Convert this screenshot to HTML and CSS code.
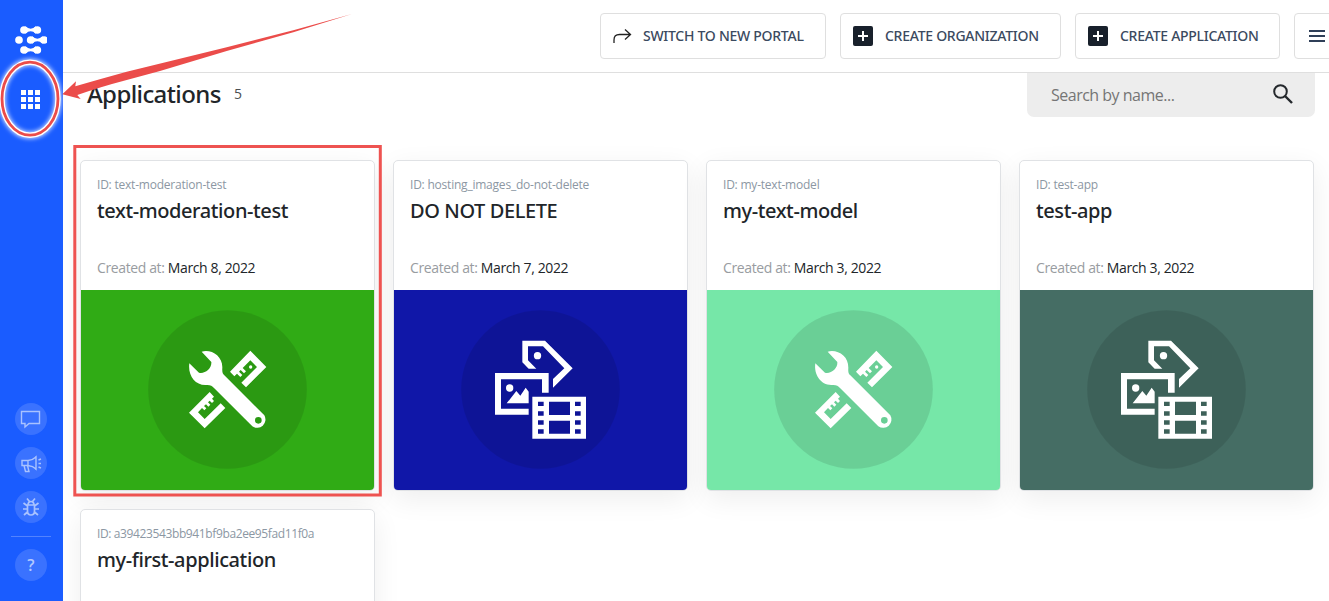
FILE: index.html
```html
<!DOCTYPE html>
<html lang="en">
<head>
<meta charset="utf-8">
<title>Applications</title>
<link rel="stylesheet" href="styles.css">
</head>
<body>
<svg class="defs" aria-hidden="true">
  <symbol id="tools" viewBox="24 31 477 477">
    <circle cx="262.500" cy="269.500" r="238" fill="#000" fill-opacity=".1"/>
    <path fill="#fff" fill-rule="evenodd" d="M185 156C213 148 248 168 247 204C246 218 248 222 253 227L373 347A25 25 0 0 1 337 380L222 265C216 257 210 255 196 256C164 256 143 225 148 191L177 219C193 224 216 207 214 187ZM355 352A10 10 0 1 0 355 372A10 10 0 1 0 355 352Z"/>
    <path fill="#fff" fill-rule="evenodd" d="M331 153L379 202L318 263L304 249L351 202L331 182L308 205L318 215L312 221L302 211L297 216L307 226L301 232L291 222L283 230L270 216Z"/>
    <circle cx="332" cy="202" r="5" fill="#fff"/>
    <path fill="#fff" d="M209 277L222 291L216 297L222 304L216 310L209 303L204 308L211 315L205 321L198 314L192 319L199 326L193 332L186 325L174 338L194 358L242 311L256 325L194 386L147 339Z"/>
  </symbol>
  <symbol id="media" viewBox="18 31 477 477">
    <circle cx="256.500" cy="269.500" r="238" fill="#000" fill-opacity=".1"/>
    <path fill="#fff" fill-rule="evenodd" d="M202 123H270L353 206L294 264V238L328 206L264 140H219V182L244 207H221L202 188Z"/>
    <circle cx="247.500" cy="168" r="11" fill="#fff"/>
    <path fill="#fff" d="M120 220H281V279H261V239H138V327H221V345H120Z"/>
    <circle cx="164" cy="265" r="11" fill="#fff"/>
    <path fill="#fff" d="M155 311L184 274L196 288L212 264L221 276V311Z"/>
    <path fill="#fff" fill-rule="evenodd" d="M232 291H393V417H232ZM282 306V346H345V306ZM282 363V402H345V363ZM249 306V319H266V306ZM249 335V348H266V335ZM249 362V375H266V362ZM249 389V402H266V389ZM360 306V319H377V306ZM360 335V348H377V335ZM360 362V375H377V362ZM360 389V402H377V389Z"/>
  </symbol>
</svg>

<aside class="sidebar">
  <svg class="logo" viewBox="0 0 96 84" fill="#fff">
    <g id="link"><circle cx="27" cy="12" r="11.500"/><circle cx="67" cy="12" r="11.500"/><path d="M31 1Q47 15 63 1V23Q47 9 31 23Z"/></g>
    <circle cx="12" cy="42" r="11.500"/>
    <use href="#link" x="20" y="30"/>
    <use href="#link" y="60"/>
  </svg>
  <svg class="grid-icon" viewBox="0 0 19 19" fill="#fff"><path d="M0 0h5v5H0zM7 0h5v5H7zM14 0h5v5h-5zM0 7h5v5H0zM7 7h5v5H7zM14 7h5v5h-5zM0 14h5v5H0zM7 14h5v5H7zM14 14h5v5h-5z"/></svg>
  <nav class="side-tools">
    <a class="round"><svg viewBox="0 0 32 32"><path d="M6.500 8.500H24.500V20.500H14L10 24V20.500H6.500Z"/></svg></a>
    <a class="round"><svg viewBox="0 0 32 32"><path d="M13 13.500H7V18.500H13ZM13 13.500Q18 13 21 10V22Q18 19 13 18.500M9 18.500L10.500 24.500H14L12.500 18.500M21 9V23M23.500 13L26 12M23.500 16.500H26M23.500 20L26 21"/></svg></a>
    <a class="round"><svg class="bold" viewBox="0 0 32 32"><path d="M12.500 14H19.500V20Q19.500 24 16 24T12.500 20ZM13 14Q13 10.500 16 10.500T19 14M12 7.500L14.500 10.500M20 7.500L17.500 10.500M8.500 12L12.500 15M23.500 12L19.500 15M8 18H12.500M24 18H19.500M9 24L12.500 21M23 24L19.500 21"/></svg></a>
    <hr>
    <a class="round help">?</a>
  </nav>
</aside>

<div class="page">
  <header class="topbar">
    <a class="btn switch"><svg width="20" height="16" viewBox="0 0 20 16" fill="none" stroke="#222" stroke-width="1.300"><path d="M1 15V12Q1 6.500 6.500 6.500H17.500M12 1.500L17.500 6.500L12 11.500"/></svg><span>SWITCH TO NEW PORTAL</span></a>
    <a class="btn org"><i class="plus"></i><span>CREATE ORGANIZATION</span></a>
    <a class="btn app"><i class="plus"></i><span>CREATE APPLICATION</span></a>
    <a class="btn menu"><svg width="16" height="12" viewBox="0 0 16 12" stroke="#2f3f58" stroke-width="2"><path d="M0 1H16M0 6H16M0 11H16"/></svg></a>
  </header>
  <main>
    <div class="heading">
      <h1>Applications</h1><span class="count">5</span>
      <div class="search"><span>Search by name...</span><svg width="22" height="22" viewBox="0 0 22 22" fill="none" stroke="#24282c"><circle cx="8.500" cy="8.500" r="6.300" stroke-width="2"/><path d="M13 13L20 20" stroke-width="2.400"/></svg></div>
    </div>
    <section class="cards">
      <article class="card">
        <div class="info"><p class="id">ID: text-moderation-test</p><h2>text-moderation-test</h2><p class="date">Created at: <b>March 8, 2022</b></p></div>
        <div class="banner green"><svg><use href="#tools"/></svg></div>
      </article>
      <article class="card">
        <div class="info"><p class="id">ID: hosting_images_do-not-delete</p><h2 class="caps">DO NOT DELETE</h2><p class="date">Created at: <b>March 7, 2022</b></p></div>
        <div class="banner blue"><svg><use href="#media"/></svg></div>
      </article>
      <article class="card">
        <div class="info"><p class="id">ID: my-text-model</p><h2>my-text-model</h2><p class="date">Created at: <b>March 3, 2022</b></p></div>
        <div class="banner mint"><svg><use href="#tools"/></svg></div>
      </article>
      <article class="card">
        <div class="info"><p class="id">ID: test-app</p><h2>test-app</h2><p class="date">Created at: <b>March 3, 2022</b></p></div>
        <div class="banner teal"><svg><use href="#media"/></svg></div>
      </article>
      <article class="card">
        <div class="info"><p class="id hash">ID: a39423543bb941bf9ba2ee95fad11f0a</p><h2>my-first-application</h2></div>
      </article>
    </section>
  </main>
</div>

<svg class="annotations" viewBox="0 0 1329 601">
  <defs><filter id="glow" x="-30%" y="-30%" width="160%" height="160%"><feGaussianBlur stdDeviation="2"/></filter></defs>
  <g fill="none">
    <ellipse cx="30" cy="98.700" rx="28" ry="36.500" stroke="#fff" stroke-opacity=".8" stroke-width="7" filter="url(#glow)"/>
    <ellipse cx="30" cy="98.700" rx="28" ry="36.500" stroke="#fff" stroke-width="5.400"/>
    <ellipse cx="30" cy="98.700" rx="28" ry="36.500" stroke="#eb4c4a" stroke-width="2.800"/>
    <rect x="74.800" y="146.500" width="305.500" height="348.500" stroke="#ee5351" stroke-width="3"/>
  </g>
  <path fill="#eb4c4a" d="M62.300 94.300L76 81.300L75.300 86.300Q100 79 126.700 71.700L226.700 47.300L293.300 30.300L352 14L293.300 32.300L226.700 51L160 71L126.700 80Q100 87 77.300 95L80.700 99Z"/>
</svg>
</body>
</html>
```
FILE: styles.css
```css
* { box-sizing: border-box; margin: 0; padding: 0; }
body {
  display: flex;
  height: 601px;
  overflow: hidden;
  background: #fff;
  color: #212529;
  font-family: "Open Sans", "Noto Sans", sans-serif;
}
.defs { position: absolute; width: 0; height: 0; }

.sidebar {
  width: 63px;
  height: 601px;
  flex: none;
  display: flex;
  flex-direction: column;
  align-items: center;
  padding: 26px 1px 20px 0;
  background: #1a5cff;
}
.logo { width: 32px; height: 28px; }
.grid-icon { width: 19px; height: 19px; margin: 36px 1px 0 0; }
.side-tools { margin-top: auto; display: flex; flex-direction: column; align-items: center; gap: 12px; }
.round { display: block; width: 32px; height: 32px; border-radius: 50%; background: #3a72ff; }
.round svg { display: block; fill: none; stroke: #a9c2ff; stroke-width: 1.4; }
.round .bold { stroke-width: 1.7; }
.side-tools hr { width: 40px; height: 1px; margin-top: 1px; border: 0; background: #5283ff; }
.help { color: #b3c9ff; font-size: 16px; font-weight: 600; line-height: 32px; text-align: center; }

.page { flex: 1; min-width: 0; overflow: hidden; }
.topbar {
  display: flex;
  gap: 14px;
  height: 73px;
  padding: 13px 0 0 537px;
  border-bottom: 1px solid #dfdfdf;
}
.btn {
  flex: none;
  display: flex;
  align-items: center;
  gap: 12px;
  height: 46px;
  padding-left: 12px;
  border: 1px solid #dfdfdf;
  border-radius: 4px;
  color: #3b4a60;
  font-family: "Noto Sans", "Open Sans", sans-serif;
  font-size: 14px;
  font-weight: 500;
  letter-spacing: -.27px;
  white-space: nowrap;
}
.btn span { padding-bottom: 2px; }
.switch { width: 226px; gap: 10px; }
.org { width: 221px; }
.app { width: 205px; }
.menu { width: 60px; padding-left: 14px; }
.plus {
  width: 20px;
  height: 20px;
  border-radius: 2px;
  background:
    linear-gradient(#fff, #fff) center / 10px 2px no-repeat,
    linear-gradient(#fff, #fff) center / 2px 10px no-repeat,
    #18202b;
}

.heading { display: flex; height: 87px; padding: 0 14px 0 24px; }
h1, h2 { font-family: "Noto Sans", "Open Sans", sans-serif; font-weight: 500; }
h1 { width: 135px; margin-top: 4px; font-size: 24px; line-height: 34px; letter-spacing: -.6px; white-space: nowrap; }
.count { margin: 11px 0 0 12px; font-size: 14px; line-height: 20px; color: #4c5054; }
.search {
  display: flex;
  align-items: center;
  justify-content: space-between;
  width: 288px;
  height: 44px;
  margin-left: auto;
  padding: 0 21px 2px 24px;
  border-radius: 0 0 7px 7px;
  background: #ededed;
  color: #757575;
  font-size: 16px;
  letter-spacing: -.5px;
}
.search span { padding-top: 1px; }
.cards {
  display: grid;
  grid-template-columns: repeat(4, 295px);
  grid-template-rows: 331px 331px;
  gap: 18px;
  padding-left: 17px;
}
.card {
  overflow: hidden;
  border: 1px solid #e0e2e5;
  border-radius: 5px;
  background: #fff;
  box-shadow: 0 8px 28px rgba(0, 0, 0, .07);
}
.info { height: 129px; padding: 15px 16px 0; white-space: nowrap; }
.id { color: #8c97a3; font-size: 12px; line-height: 18px; letter-spacing: -.22px; }
.hash { letter-spacing: -.38px; }
h2 { margin-top: 3px; font-size: 20px; line-height: 28px; letter-spacing: -.4px; }
.date { margin-top: 33px; color: #989ca1; font-size: 14px; line-height: 20px; letter-spacing: -.38px; }
.date b { color: #212529; font-weight: 400; }
.banner { height: 200px; display: grid; place-items: center; padding-bottom: 1px; }
.banner svg { width: 159px; height: 159px; }
.green { background: #30ab15; }
.blue { background: #1017a8; }
.mint { background: #76e7a8; }
.teal { background: #456d64; }

.annotations { position: absolute; left: 0; top: 0; width: 1329px; height: 601px; pointer-events: none; }
```
